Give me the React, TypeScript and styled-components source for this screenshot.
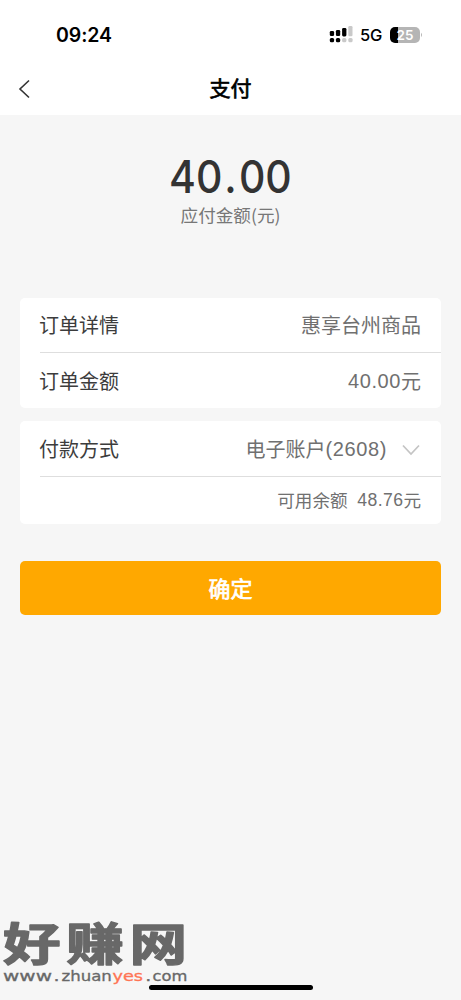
import React from "react";
import styled, { createGlobalStyle } from "styled-components";

const Global = createGlobalStyle`
  * { box-sizing: border-box; }
  body { margin: 0; background: #f6f6f6; }
`;

const Screen = styled.div`
  position: relative;
  display: flex;
  flex-direction: column;
  width: 461px;
  height: 1000px;
  overflow: hidden;
  background: #f6f6f6;
  color: #333;
  font-family: "Liberation Sans", "Noto Sans CJK SC", sans-serif;
  white-space: nowrap;
`;

const StatusBar = styled.header`
  display: flex;
  align-items: center;
  height: 63px;
  padding: 6px 38px 0 56px;
  background: #fff;
  color: #000;
  font-family: Inter, sans-serif;
`;

const Time = styled.span`
  flex: 1;
  font-size: 19.5px;
  font-weight: 600;
  letter-spacing: -0.1px;
`;

const Network = styled.span`
  margin: 0 8px 0 7px;
  font-size: 16.5px;
  font-weight: 500;
  letter-spacing: -0.3px;
`;

const Battery = styled.span`
  display: flex;
  align-items: center;
  justify-content: center;
  width: 30px;
  height: 16px;
  border-radius: 5px;
  background: linear-gradient(to right, #000 8px, #b5b5b5 8px);
  color: #fff;
  font-size: 13.5px;
  font-weight: 600;
`;

const NavBar = styled.nav`
  display: grid;
  grid-template-columns: 48px 1fr 48px;
  align-items: center;
  height: 52px;
  background: #fff;
  color: #000;
`;

const BackIcon = styled.svg`
  margin-left: 18px;
`;

const Title = styled.h1`
  margin: 0 0 4px;
  text-align: center;
  font: 400 21px/30px "Noto Sans CJK SC", sans-serif;
  -webkit-text-stroke: 0.7px #000;
`;

const Summary = styled.section`
  display: flex;
  flex-direction: column;
  align-items: center;
  height: 183px;
  padding-top: 37px;
`;

const Amount = styled.div`
  font: 500 45px/50px Inter, sans-serif;
  transform: scaleX(0.91);
`;

const Point = styled.span`
  margin: 0 2.5px 0 2px;
`;

const Caption = styled.div`
  color: #777;
  font: 17.6px/26px "Noto Sans CJK SC", sans-serif;
`;

const Card = styled.section`
  margin: 0 20px 13px;
  padding-left: 20px;
  border-radius: 5px;
  background: #fff;
`;

const Row = styled.div<{ $h: number; $divided?: boolean; $small?: boolean }>`
  display: flex;
  align-items: center;
  justify-content: space-between;
  height: ${(p) => p.$h}px;
  padding: ${(p) => (p.$small ? 0 : 2)}px 20px 0 0;
  border-bottom: ${(p) => (p.$divided ? "1px solid #dedede" : "none")};
  font-size: ${(p) => (p.$small ? 17.6 : 20)}px;
  line-height: 28px;
`;

const Label = styled.span`
  margin-left: -1px;
  color: #3c3c3c;
`;

const Value = styled.span`
  display: flex;
  align-items: center;
  margin-left: auto;
  color: #707070;
`;

const Digits = styled.span<{ $spacing?: number }>`
  margin-top: -1px;
  letter-spacing: ${(p) => p.$spacing ?? 0}px;
`;

const ChevronDown = styled.svg`
  margin: 1px 1px 0 15px;
`;

const Confirm = styled.button`
  height: 54px;
  margin: 24px 20px 0;
  padding: 0 0 3px;
  border: 0;
  border-radius: 5px;
  background: #ffa800;
  color: #fff;
  font: 400 22px/32px "Noto Sans CJK SC", sans-serif;
  -webkit-text-stroke: 0.7px #fff;
`;

const Watermark = styled.svg`
  position: absolute;
  left: 0;
  bottom: 12px;
  fill: #686868;
  overflow: visible;
`;

const HomeIndicator = styled.div`
  position: absolute;
  left: 149px;
  bottom: 10px;
  width: 164px;
  height: 5px;
  border-radius: 3px;
  background: #000;
`;

function Signal() {
  return (
    <svg width="24" height="17" viewBox="0 0 24 17">
      <g fill="#000">
        <rect x="0.8" y="5" width="4.3" height="5" rx="1.3" />
        <rect x="6.9" y="4" width="4.3" height="6" rx="1.3" />
        <rect x="13.1" y="2" width="4.3" height="8.4" rx="1.3" />
        <rect x="0.8" y="12" width="4.3" height="4.2" rx="1.5" />
        <rect x="6.9" y="12" width="4.3" height="4.2" rx="1.5" />
      </g>
      <g fill="#c9c9c9">
        <rect x="19.3" y="0" width="4.2" height="10.2" rx="1.3" />
        <rect x="13.1" y="12" width="4.3" height="4.2" rx="1.5" />
        <rect x="19.3" y="12" width="4.3" height="4.2" rx="1.5" />
      </g>
    </svg>
  );
}

function SiteMark() {
  return (
    <Watermark width="190" height="68" viewBox="0 0 190 68">
      <g
        transform="translate(3 41.3) scale(1.28 1)"
        fontFamily="'Noto Sans CJK SC', sans-serif"
        fontSize="45"
        fontWeight="700"
        stroke="#686868"
        strokeWidth="1.4"
        strokeLinejoin="round"
      >
        <text x="0 49.5 98.8" y="0">好赚网</text>
      </g>
      <g
        transform="translate(3 61) scale(1.36 1)"
        fontFamily="'DejaVu Sans', sans-serif"
        fontSize="14"
        stroke="#686868"
        strokeWidth="0.3"
      >
        <text x="0" y="0" textLength="36" lengthAdjust="spacingAndGlyphs">www</text>
        <text x="37.2" y="0">.</text>
        <text x="43" y="0" textLength="37" lengthAdjust="spacingAndGlyphs">zhuan</text>
        <text x="80.5" y="0" textLength="22.5" lengthAdjust="spacingAndGlyphs" fill="#ff7454" stroke="#ff7454">yes</text>
        <text x="104.6" y="0">.</text>
        <text x="110" y="0" textLength="25.6" lengthAdjust="spacingAndGlyphs">com</text>
      </g>
    </Watermark>
  );
}

export default function App() {
  return (
    <Screen>
      <Global />
      <StatusBar>
        <Time>09:24</Time>
        <Signal />
        <Network>5G</Network>
        <Battery>25</Battery>
        <svg width="3" height="6" viewBox="0 0 3 6">
          <path d="M1 0.8Q3 3 1 5.2Z" fill="#b5b5b5" />
        </svg>
      </StatusBar>
      <NavBar>
        <BackIcon width="14" height="20" viewBox="0 0 14 20">
          <path d="M11 1.5L2 10L11 18.5" fill="none" stroke="#333" strokeWidth="1.6" />
        </BackIcon>
        <Title>支付</Title>
      </NavBar>
      <Summary>
        <Amount>40<Point>.</Point>00</Amount>
        <Caption>应付金额(元)</Caption>
      </Summary>
      <Card>
        <Row $h={55} $divided>
          <Label>订单详情</Label>
          <Value>惠享台州商品</Value>
        </Row>
        <Row $h={55}>
          <Label>订单金额</Label>
          <Value><Digits $spacing={0.6}>40.00</Digits>元</Value>
        </Row>
      </Card>
      <Card>
        <Row $h={56} $divided>
          <Label>付款方式</Label>
          <Value>
            电子账户<Digits $spacing={0.6}>(2608)</Digits>
            <ChevronDown width="18" height="12" viewBox="0 0 18 12">
              <path d="M1 1.5L9 10L17 1.5" fill="none" stroke="#c4c4c4" strokeWidth="1.7" />
            </ChevronDown>
          </Value>
        </Row>
        <Row $h={47} $small>
          <Value>可用余额&nbsp;&nbsp;<Digits $spacing={0.4}>48.76</Digits>元</Value>
        </Row>
      </Card>
      <Confirm>确定</Confirm>
      <SiteMark />
      <HomeIndicator />
    </Screen>
  );
}
